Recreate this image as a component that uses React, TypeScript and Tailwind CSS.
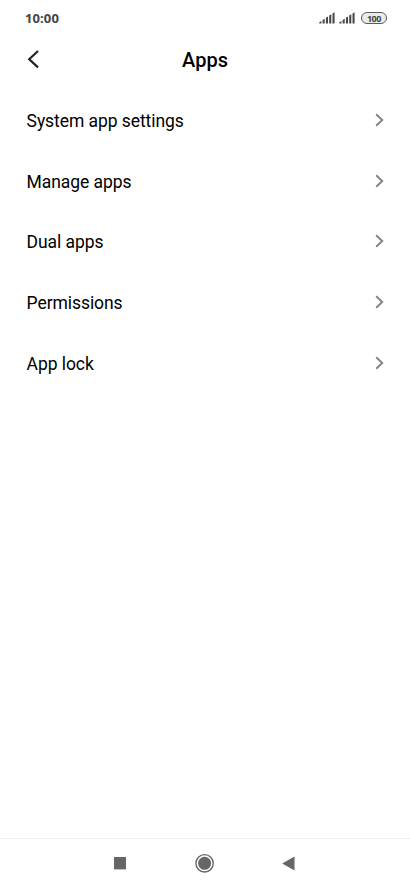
const items = ["System app settings", "Manage apps", "Dual apps", "Permissions", "App lock"];

const Signal = () => (
  <svg width="16" height="12" viewBox="0 0 16 12" fill="#484848">
    <path d="M0.3 11.5V10.2L2.4 9V11.5ZM3.6 11.5V8.1L5.7 6.8V11.5ZM6.9 11.5V5.8L9 4.5V11.5ZM10.2 11.5V3.6L12.3 2.3V11.5ZM13.5 11.5V1.4L15.6 0.3V11.5Z" />
  </svg>
);

const App = () => {
  return (
    <div className="flex h-screen w-full flex-col bg-white font-['Roboto',sans-serif] text-black">
      <header className="flex h-9 items-center justify-between pl-[25px] pr-[23px]">
        <span className="pt-px font-['Open_Sans',sans-serif] text-[13px] font-bold leading-none tracking-[0.1px] text-[#444]">10:00</span>
        <div className="flex items-center gap-1">
          <Signal />
          <Signal />
          <span className="ml-[2px] flex h-[12px] w-[26px] items-center justify-center rounded-full border border-[#5c5c5c] bg-[#ebebeb] font-['Open_Sans',sans-serif] text-[9px] font-bold leading-none tracking-[-0.4px] text-[#444]">
            100
          </span>
        </div>
      </header>
      <div className="grid h-12 grid-cols-[1fr_auto_1fr] items-center">
        <svg className="mb-[2px] ml-[26px]" width="14" height="20" viewBox="0 0 14 20" fill="none" stroke="#222" strokeWidth="2.2">
          <path d="M12 2 3.2 10.2 12 18.4" />
        </svg>
        <h1 className="text-xl font-medium">Apps</h1>
      </div>
      <ul className="mt-[6px] flex-1">
        {items.map((item) => (
          <li key={item} className="flex h-[60.75px] items-center justify-between pl-[26.6px] pr-[26px]">
            <span className="pt-px text-[17.5px] tracking-[-0.07px]">{item}</span>
            <svg className="mb-px" width="9" height="14" viewBox="0 0 9 14" fill="none" stroke="#858585" strokeWidth="2">
              <path d="m1.2 1.2 6 5.8-6 5.8" />
            </svg>
          </li>
        ))}
      </ul>
      <nav className="flex h-[50px] items-center border-t border-[#f0f0f0] pl-[114px] text-[#666]">
        <svg width="12" height="13" viewBox="0 0 12 13" fill="currentColor">
          <path d="M0 0h12v12.4H0z" />
        </svg>
        <svg className="ml-[68px]" width="21" height="21" viewBox="0 0 21 21">
          <circle cx="10.6" cy="10.3" r="8.7" fill="none" stroke="currentColor" strokeWidth="1.4" />
          <circle cx="10.6" cy="10.3" r="6.5" fill="currentColor" />
        </svg>
        <svg className="ml-[67px]" width="13" height="15" viewBox="0 0 13 15" fill="currentColor">
          <path d="M0.2 7.4 12.5 0.4v14z" />
        </svg>
      </nav>
    </div>
  );
};

export default App;
